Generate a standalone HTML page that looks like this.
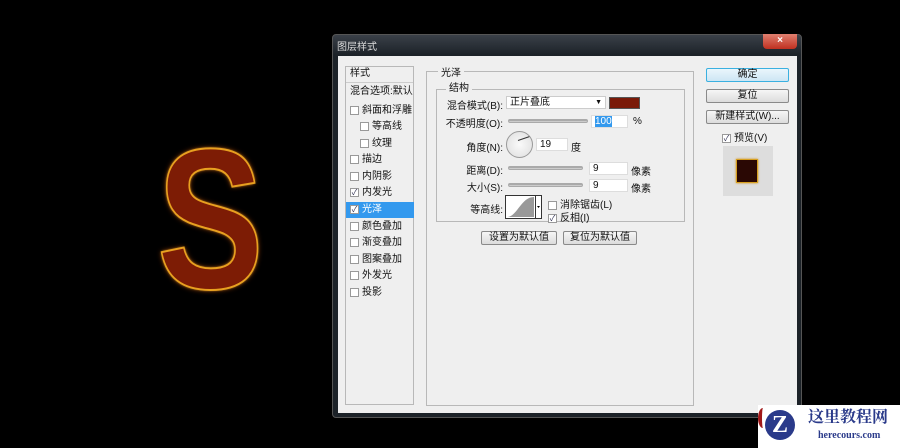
<!DOCTYPE html>
<html><head><meta charset="utf-8"><style>
*{margin:0;padding:0;box-sizing:border-box}
body{width:900px;height:448px;background:#000;position:relative;overflow:hidden;font-family:"Liberation Sans","Noto Sans CJK SC",sans-serif;font-size:10px;color:#111}
.a{position:absolute}
.S{left:157px;top:120px;font:bold 200px/1 "Liberation Sans",sans-serif;color:#7d1c05;-webkit-text-stroke:2px #e8a020;text-shadow:0 0 3px #ffcc33,0 0 6px #c05010;transform:scaleX(0.8);transform-origin:left}
.dlg{left:332px;top:34px;width:470px;height:384px;background:linear-gradient(#3a4048,#1c2228 20px,#1c2228);border:1px solid #555;border-radius:4px}
.body{left:338px;top:56px;width:459px;height:357px;background:#efefef}
.box{border:1px solid #b8b8b8}
.btn{border:1px solid #8a8a8a;border-radius:2px;background:linear-gradient(#f6f6f6,#dcdcdc);text-align:center;font-size:10px;line-height:12px}
.cb{width:9px;height:9px;border:1px solid #999;background:#fff;display:inline-block;vertical-align:middle;margin-right:3px;font-size:8px;line-height:7px;text-align:center;color:#335}
.li{position:absolute;left:346px;width:68px;height:16px;line-height:16px;padding-left:4px;font-size:10px}
.inp{background:#fff;border:1px solid #ddd;height:13px;line-height:12px;padding-left:3px}
.sl{height:4px;background:linear-gradient(#999,#ddd);border:1px solid #aaa;border-radius:2px}
</style></head><body>
<div class="a S">S</div>
<div class="a dlg"></div>
<div class="a" style="left:337px;top:38px;color:#ddd;font-size:10px">图层样式</div>
<div class="a" style="left:763px;top:34px;width:34px;height:15px;background:linear-gradient(#e08070,#c03020);border-radius:0 0 4px 4px;color:#fff;text-align:center;font-size:10px;line-height:14px;font-weight:bold">×</div>
<div class="a body"></div>
<div class="a box" style="left:345px;top:66px;width:69px;height:339px;background:#efefef"></div>
<div class="li" style="top:66px">样式</div>
<div class="a" style="left:346px;top:82px;width:67px;height:1px;background:#ccc"></div>
<div class="li" style="top:84px">混合选项:默认</div>
<div class="li" style="top:103px"><span class="cb"></span>斜面和浮雕</div>
<div class="li" style="top:119px;padding-left:14px"><span class="cb"></span>等高线</div>
<div class="li" style="top:136px;padding-left:14px"><span class="cb"></span>纹理</div>
<div class="li" style="top:152px"><span class="cb"></span>描边</div>
<div class="li" style="top:169px"><span class="cb"></span>内阴影</div>
<div class="li" style="top:185px"><span class="cb">✓</span>内发光</div>
<div class="li" style="top:202px;background:#3399ee;color:#fff"><span class="cb">✓</span>光泽</div>
<div class="li" style="top:219px"><span class="cb"></span>颜色叠加</div>
<div class="li" style="top:235px"><span class="cb"></span>渐变叠加</div>
<div class="li" style="top:252px"><span class="cb"></span>图案叠加</div>
<div class="li" style="top:268px"><span class="cb"></span>外发光</div>
<div class="li" style="top:285px"><span class="cb"></span>投影</div>

<div class="a box" style="left:426px;top:71px;width:268px;height:335px"></div>
<div class="a" style="left:438px;top:64px;background:#efefef;padding:0 3px">光泽</div>
<div class="a box" style="left:436px;top:89px;width:249px;height:133px"></div>
<div class="a" style="left:446px;top:79px;background:#efefef;padding:0 3px">结构</div>

<div class="a" style="left:400px;top:97px;width:103px;text-align:right">混合模式(B):</div>
<div class="a inp" style="left:506px;top:96px;width:100px;border-color:#ccc">正片叠底<span style="position:absolute;right:3px;top:0;font-size:7px">▼</span></div>
<div class="a" style="left:609px;top:97px;width:31px;height:12px;background:#7a1a08;border:1px solid #555"></div>
<div class="a" style="left:400px;top:115px;width:103px;text-align:right">不透明度(O):</div>
<div class="a sl" style="left:508px;top:119px;width:80px"></div>
<div class="a inp" style="left:591px;top:115px;width:37px"><span style="background:#3399ee;color:#fff">100</span></div>
<div class="a" style="left:633px;top:116px">%</div>
<div class="a" style="left:400px;top:139px;width:103px;text-align:right">角度(N):</div>
<div class="a" style="left:506px;top:131px;width:27px;height:27px;border:1px solid #999;border-radius:50%;background:radial-gradient(#fafafa,#ddd)"></div>
<div class="a" style="left:518px;top:140px;width:12px;height:1px;background:#333;transform:rotate(-19deg);transform-origin:left"></div>
<div class="a inp" style="left:536px;top:138px;width:32px">19</div>
<div class="a" style="left:571px;top:139px">度</div>
<div class="a" style="left:400px;top:162px;width:103px;text-align:right">距离(D):</div>
<div class="a sl" style="left:508px;top:166px;width:75px"></div>
<div class="a inp" style="left:589px;top:162px;width:39px">9</div>
<div class="a" style="left:631px;top:163px">像素</div>
<div class="a" style="left:400px;top:179px;width:103px;text-align:right">大小(S):</div>
<div class="a sl" style="left:508px;top:183px;width:75px"></div>
<div class="a inp" style="left:589px;top:179px;width:39px">9</div>
<div class="a" style="left:631px;top:180px">像素</div>
<div class="a" style="left:400px;top:201px;width:103px;text-align:right">等高线:</div>
<svg class="a" style="left:505px;top:195px" width="37" height="24"><rect x="0.5" y="0.5" width="30" height="23" fill="#fff" stroke="#333"/><path d="M2 22 C12 22 16 2 29 2 L29 22Z" fill="#999"/><rect x="30.5" y="0.5" width="6" height="23" fill="#fff" stroke="#333"/><path d="M32 11h3l-1.5 2z" fill="#000"/></svg>
<div class="a" style="left:548px;top:196px"><span class="cb"></span>消除锯齿(L)</div>
<div class="a" style="left:548px;top:209px"><span class="cb">✓</span>反相(I)</div>
<div class="a btn" style="left:481px;top:231px;width:76px;height:14px">设置为默认值</div>
<div class="a btn" style="left:563px;top:231px;width:74px;height:14px">复位为默认值</div>

<div class="a btn" style="left:706px;top:68px;width:83px;height:14px;border-color:#3ab0e0;background:linear-gradient(#eaf6fc,#cde6f4)">确定</div>
<div class="a btn" style="left:706px;top:89px;width:83px;height:14px">复位</div>
<div class="a btn" style="left:706px;top:110px;width:83px;height:14px">新建样式(W)...</div>
<div class="a" style="left:722px;top:129px"><span class="cb">✓</span>预览(V)</div>
<div class="a" style="left:723px;top:146px;width:50px;height:50px;background:#ddd"></div>
<div class="a" style="left:736px;top:159px;width:22px;height:24px;background:#2a0804;border:1px solid #d8a020;box-shadow:0 0 2px #c80"></div>

<div class="a" style="left:758px;top:405px;width:142px;height:43px;background:#fff"></div>
<div class="a" style="left:765px;top:410px;width:30px;height:30px;border-radius:50%;background:#2a3a8a;color:#fff;font:bold 24px/30px 'Liberation Serif',serif;text-align:center">Z</div>
<div class="a" style="left:758px;top:408px;width:10px;height:20px;border-left:4px solid #a01818;border-radius:50%"></div>
<div class="a" style="left:808px;top:409px;color:#2a3a8a;font:bold 16px/18px 'Liberation Serif','Noto Serif CJK SC',serif">这里教程网</div>
<div class="a" style="left:818px;top:430px;color:#2a3a8a;font:bold 10px/12px 'Liberation Serif',serif">herecours.com</div>
</body></html>
